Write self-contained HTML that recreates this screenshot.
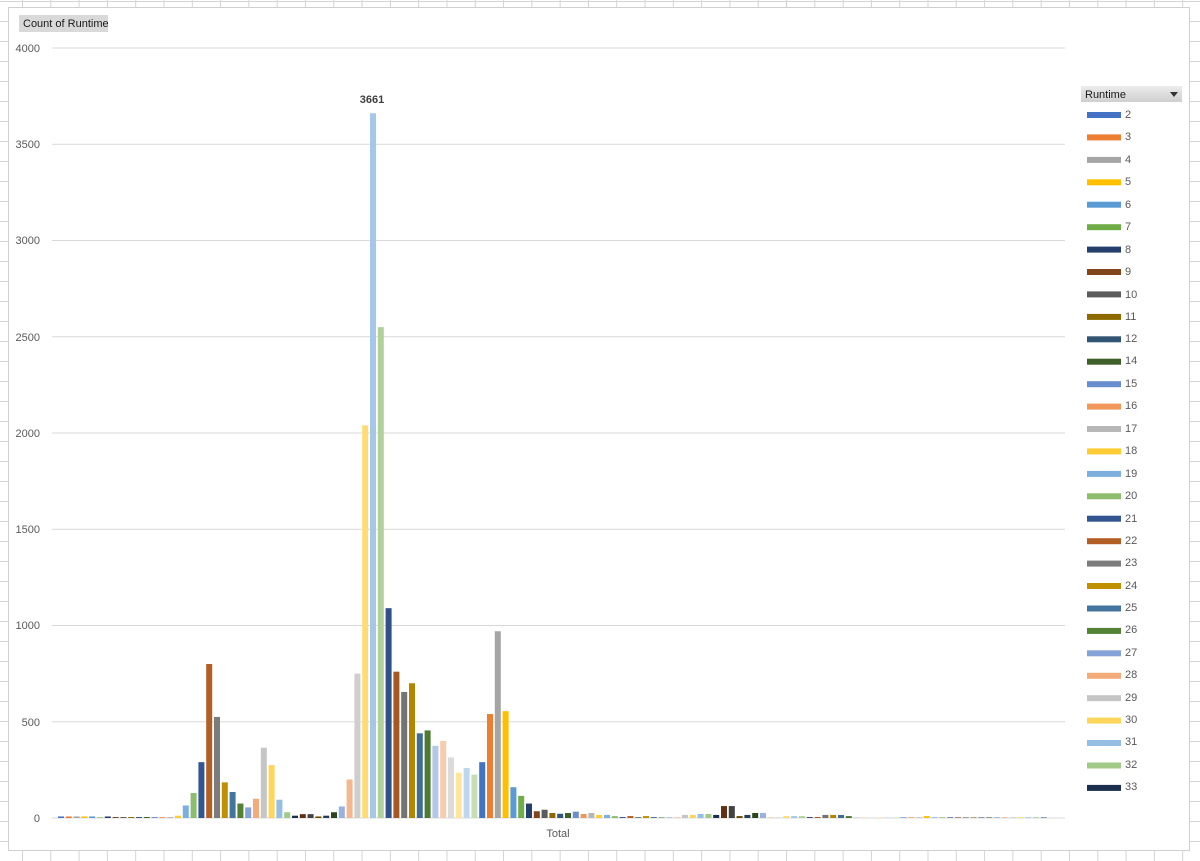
<!DOCTYPE html>
<html><head><meta charset="utf-8"><style>
body{margin:0;width:1200px;height:861px;overflow:hidden;background:#fff;position:relative;font-family:"Liberation Sans",sans-serif;
background-image:linear-gradient(to right,#d4d4d4 1px,transparent 1px),linear-gradient(to bottom,#d4d4d4 1px,transparent 1px);
background-size:28.3px 20px;background-position:22px 0,0 1px;}
#chart{position:absolute;left:8px;top:7px;width:1180px;height:842px;background:#fff;border:1px solid #d0d0d0;}
svg{position:absolute;left:0;top:0}
text{font-family:"Liberation Sans",sans-serif;font-size:11px;fill:#595959}
</style></head><body>
<div id="chart"></div>
<svg width="1200" height="861" id="s">
<rect x="19" y="15" width="89" height="17" fill="#d9d9d9"/>
<text x="23" y="27" style="fill:#1a1a1a">Count of Runtime</text>
<g id="grid"></g>
<text x="40" y="52" text-anchor="end">4000</text>
<text x="40" y="148" text-anchor="end">3500</text>
<text x="40" y="244" text-anchor="end">3000</text>
<text x="40" y="341" text-anchor="end">2500</text>
<text x="40" y="437" text-anchor="end">2000</text>
<text x="40" y="533" text-anchor="end">1500</text>
<text x="40" y="629" text-anchor="end">1000</text>
<text x="40" y="726" text-anchor="end">500</text>
<text x="40" y="822" text-anchor="end">0</text>
<g id="bars"></g>
<text x="372" y="103" text-anchor="middle" style="font-weight:bold;fill:#404040">3661</text>
<text x="558" y="837" text-anchor="middle">Total</text>
<defs><linearGradient id="hg" x1="0" y1="0" x2="0" y2="1"><stop offset="0" stop-color="#ececec"/><stop offset="1" stop-color="#cfcfcf"/></linearGradient></defs>
<rect x="1081" y="86" width="101" height="16" fill="url(#hg)"/>
<text x="1085" y="98" style="fill:#1a1a1a">Runtime</text>
<path d="M1170 92 L1178 92 L1174 97 Z" fill="#333"/>
<g id="leg"></g>
<text x="1125" y="118">2</text><text x="1125" y="140">3</text><text x="1125" y="163">4</text><text x="1125" y="185">5</text>
<text x="1125" y="208">6</text><text x="1125" y="230">7</text><text x="1125" y="253">8</text><text x="1125" y="275">9</text>
<text x="1125" y="298">10</text><text x="1125" y="320">11</text><text x="1125" y="342">12</text><text x="1125" y="364">14</text>
<text x="1125" y="387">15</text><text x="1125" y="409">16</text><text x="1125" y="432">17</text><text x="1125" y="454">18</text>
<text x="1125" y="477">19</text><text x="1125" y="499">20</text><text x="1125" y="522">21</text><text x="1125" y="544">22</text>
<text x="1125" y="566">23</text><text x="1125" y="589">24</text><text x="1125" y="611">25</text><text x="1125" y="633">26</text>
<text x="1125" y="656">27</text><text x="1125" y="678">28</text><text x="1125" y="701">29</text><text x="1125" y="723">30</text>
<text x="1125" y="745">31</text><text x="1125" y="768">32</text><text x="1125" y="790">33</text>
</svg>
<script>
var NS="http://www.w3.org/2000/svg";
function el(p,t,a){var e=document.createElementNS(NS,t);for(var k in a)e.setAttribute(k,a[k]);p.appendChild(e);}
var g=document.getElementById('grid');
for(var i=0;i<=8;i++){var y=48+i*96.25;el(g,'line',{x1:52,x2:1065,y1:y,y2:y,stroke:'#d9d9d9','stroke-width':1});}
var base=[[68,114,196],[237,125,49],[165,165,165],[255,192,0],[91,155,213],[112,173,71]];
var sh=[0,-0.45,0.2,-0.25,0.35,-0.6,0.45,-0.3,0.6];
function col(i){var b=base[i%6],s=sh[Math.floor(i/6)%9];return 'rgb('+b.map(function(c){return Math.round(s<0?c*(1+s):c+(255-c)*s)}).join(',')+')';}
var v=[8,8,8,8,8,3,8,5,5,5,5,5,5,5,5,12,65,130,290,800,525,185,135,75,55,100,365,275,95,30,12,20,20,8,12,30,60,200,750,2040,3661,2550,1090,760,655,700,440,455,375,400,315,235,260,225,290,540,970,555,160,115,75,35,
43,26,22,26,33,21,26,16,16,10,5,10,5,10,5,3,3,3,16,16,21,21,16,62,62,10,16,26,26,3,3,10,10,10,5,5,16,16,16,10,3,3,3,3,3,3,3,3,3,10,3,3,3,3,3,3,3,3,3,3,3,3,3,3,3];
var b=document.getElementById('bars');
for(var i=0;i<v.length;i++){var h=v[i]*96.25/500;var x=58+i*7.8;el(b,'rect',{x:x.toFixed(2),y:(818-h).toFixed(2),width:6,height:h.toFixed(2),fill:col(i)});}
var l=document.getElementById('leg');
for(var i=0;i<31;i++){var y=112+i*22.43;el(l,'rect',{x:1087,y:y.toFixed(1),width:34,height:6,fill:col(i)});}
</script>
</body></html>
